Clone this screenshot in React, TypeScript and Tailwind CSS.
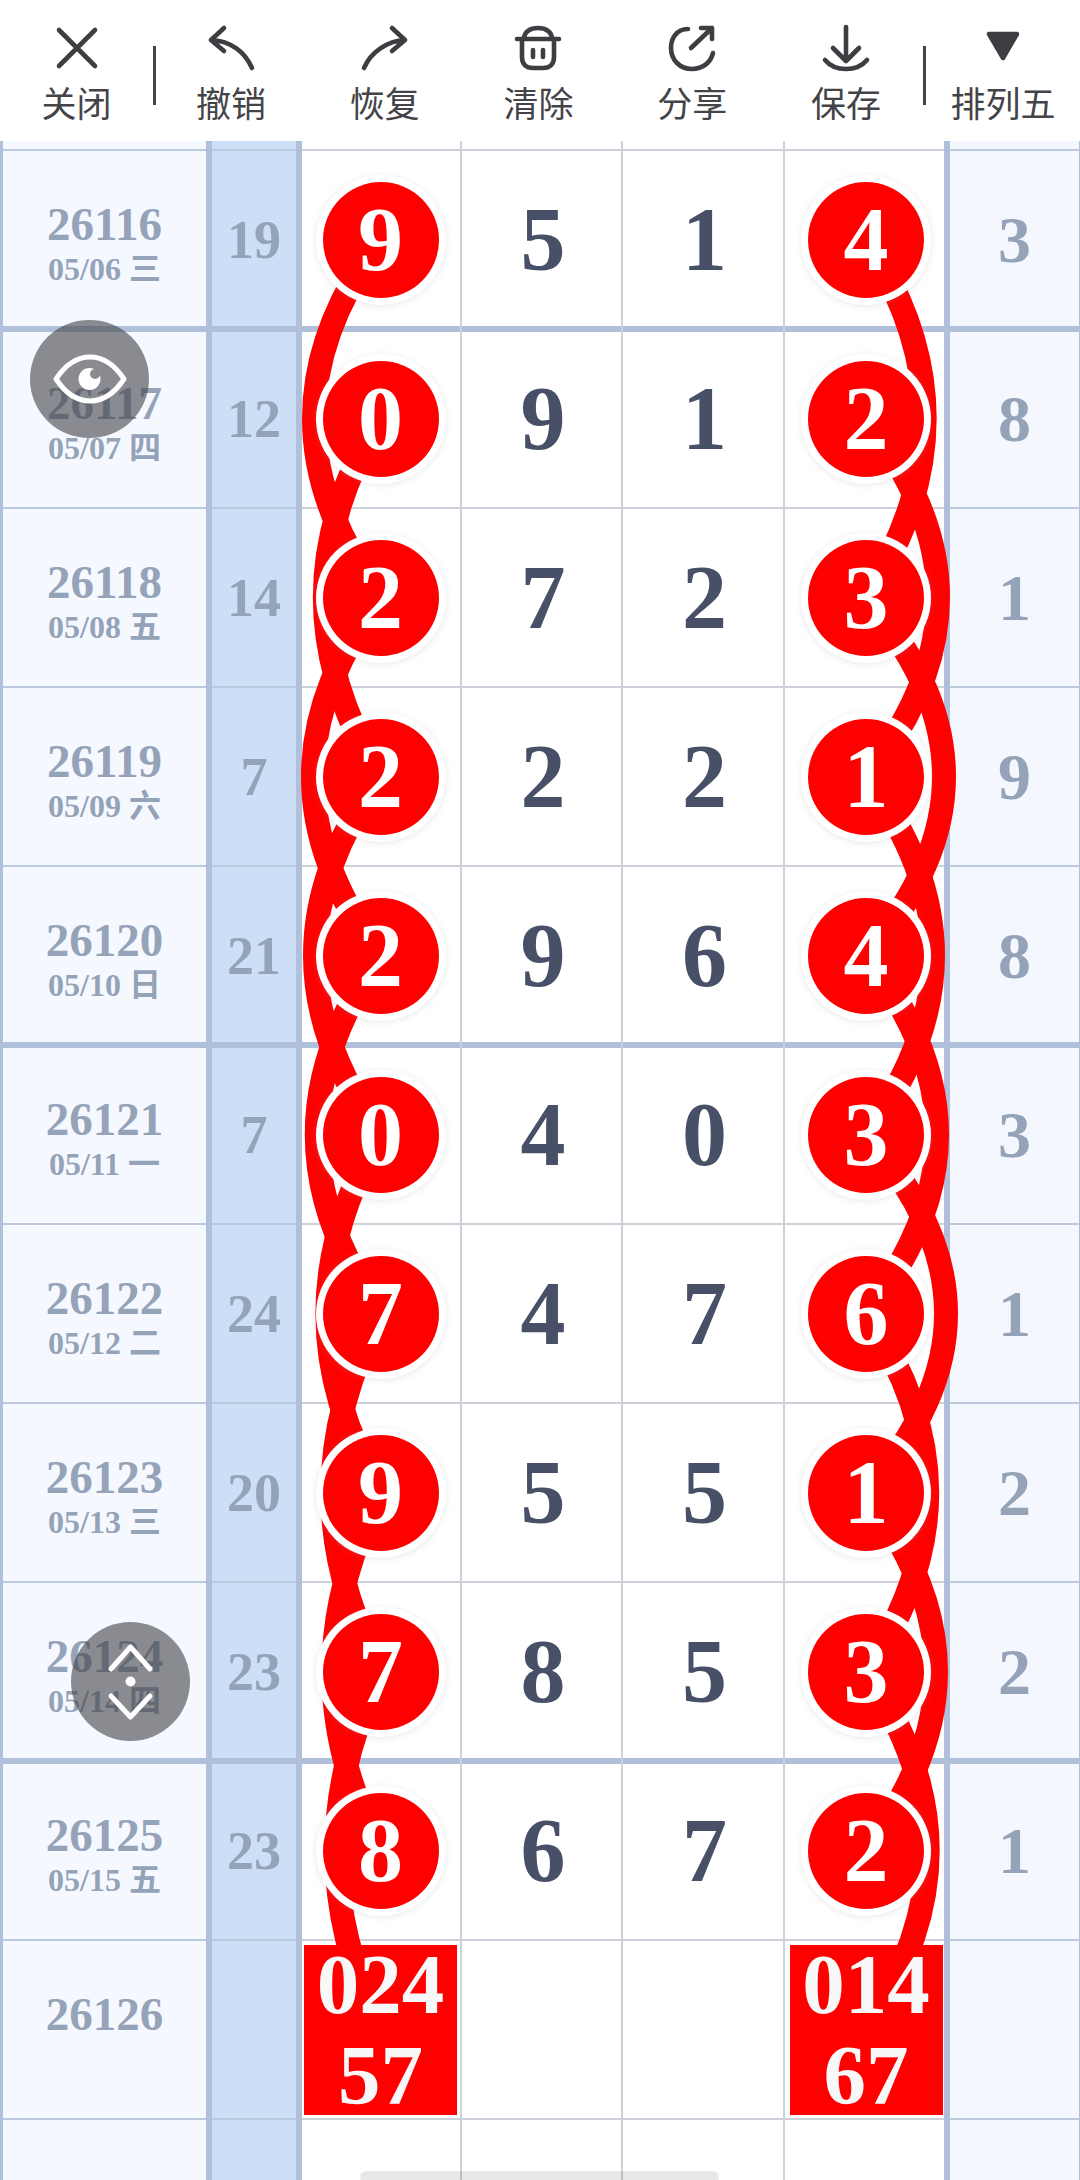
import React from "react";

const serif = "font-['Liberation_Serif','Noto_Sans_CJK_SC',serif] font-bold";

type Row = { id: string; date: string; sum: string; a: string; b: string; c: string; d: string; e: string };
const rows: Row[] = [
  { id: "26116", date: "05/06 三", sum: "19", a: "9", b: "5", c: "1", d: "4", e: "3" },
  { id: "26117", date: "05/07 四", sum: "12", a: "0", b: "9", c: "1", d: "2", e: "8" },
  { id: "26118", date: "05/08 五", sum: "14", a: "2", b: "7", c: "2", d: "3", e: "1" },
  { id: "26119", date: "05/09 六", sum: "7", a: "2", b: "2", c: "2", d: "1", e: "9" },
  { id: "26120", date: "05/10 日", sum: "21", a: "2", b: "9", c: "6", d: "4", e: "8" },
  { id: "26121", date: "05/11 一", sum: "7", a: "0", b: "4", c: "0", d: "3", e: "3" },
  { id: "26122", date: "05/12 二", sum: "24", a: "7", b: "4", c: "7", d: "6", e: "1" },
  { id: "26123", date: "05/13 三", sum: "20", a: "9", b: "5", c: "5", d: "1", e: "2" },
  { id: "26124", date: "05/14 四", sum: "23", a: "7", b: "8", c: "5", d: "3", e: "2" },
  { id: "26125", date: "05/15 五", sum: "23", a: "8", b: "6", c: "7", d: "2", e: "1" },
];

const sideLines: Record<string, string> = {
  "00": "shadow-[inset_0_1px_0_#bcc8dd,inset_0_-1px_0_#bcc8dd]",
  "01": "shadow-[inset_0_1px_0_#bcc8dd,inset_0_-3px_0_#b0c0da]",
  "10": "shadow-[inset_0_3px_0_#b0c0da,inset_0_-1px_0_#bcc8dd]",
};
const mainLines: Record<string, string> = {
  "00": "shadow-[inset_0_1px_0_#cdd1da,inset_0_-1px_0_#cdd1da]",
  "01": "shadow-[inset_0_1px_0_#cdd1da,inset_0_-3px_0_#b0c0da]",
  "10": "shadow-[inset_0_3px_0_#b0c0da,inset_0_-1px_0_#cdd1da]",
};

const rowY = (i: number) => 239.5 + 179 * i;
const leftBulge = [314, 325, 313, 315, 317, 327.5, 332.5, 333.5, 336.5];
const rightBulge = [924.5, 938, 944, 933, 937, 946, 927, 936, 927.5];

const strands = (x: number, bulges: number[]) =>
  bulges.map((b, i) => `M${x} ${rowY(i)} Q${2 * b - x} ${rowY(i + 1)} ${x} ${rowY(i + 2)}`);

function Ball({ v }: { v: string }) {
  return (
    <div
      className={`${serif} relative z-20 flex h-[116px] w-[116px] items-center justify-center rounded-full bg-[#ff0000] text-[90px] leading-none text-white shadow-[0_0_0_7px_#fff,0_1px_6px_7px_rgba(150,150,160,0.22)]`}
    >
      {v}
    </div>
  );
}

function Square({ top, bottom }: { top: string; bottom: string }) {
  return (
    <div
      className={`${serif} relative z-20 flex h-[170px] w-[153px] flex-col items-center justify-center bg-[#ff0000] text-[85px] leading-[91px] text-[#f8f8f8]`}
    >
      <span>{top}</span>
      <span>{bottom}</span>
    </div>
  );
}

function TableRow({ row, id, prevThick, thick, children }: {
  row?: Row;
  id?: string;
  prevThick: boolean;
  thick: boolean;
  children?: [React.ReactNode, React.ReactNode];
}) {
  const key = `${prevThick ? 1 : 0}${thick ? 1 : 0}`;
  const side = sideLines[key];
  const main = mainLines[key];
  const digit = `${serif} flex items-center justify-center pl-[3px] text-[90px] leading-none text-[#475066]`;
  return (
    <div className="grid h-[179px] grid-cols-[206px_96px_160px_161px_162px_159px_136px]">
      <div className={`${serif} ${side} flex flex-col items-center justify-center border-l-[3px] border-[#b0c0da] bg-[#f6f8ff] pt-[9px] text-[#94a3b8]`}>
        <span className="text-[47px] leading-[50px]">{row?.id ?? id ?? "\u00a0"}</span>
        <span className="text-[32px] leading-[40px]">{row?.date ?? "\u00a0"}</span>
      </div>
      <div className={`${serif} ${side} flex items-center justify-center border-x-[6px] border-[#b0c0da] bg-[#cddff7] text-[54px] leading-none text-[#94a3b8]`}>
        {row?.sum}
      </div>
      <div className={`${main} flex items-center justify-center border-r-2 border-[#cdd1da] bg-white pr-[1px]`}>
        {row ? <Ball v={row.a} /> : children?.[0]}
      </div>
      <div className={`${main} ${digit} border-r-2 border-[#cdd1da] bg-white`}>{row?.b}</div>
      <div className={`${main} ${digit} border-r-2 border-[#cdd1da] bg-white`}>{row?.c}</div>
      <div className={`${main} flex items-center justify-center bg-white pl-[3px]`}>
        {row ? <Ball v={row.d} /> : children?.[1]}
      </div>
      <div className={`${serif} ${side} flex items-center justify-center border-l-[6px] border-r border-[#b0c0da] bg-[#f4f7fe] text-[66px] leading-none text-[#94a3b8]`}>
        {row?.e}
      </div>
    </div>
  );
}

const iconStroke = {
  fill: "none",
  stroke: "#3d3d42",
  strokeWidth: 4.6,
  strokeLinecap: "round" as const,
  strokeLinejoin: "round" as const,
};

function ToolItem({ label, className, children }: { label: string; className: string; children: React.ReactNode }) {
  return (
    <div className={`flex flex-col items-center pt-[24px] ${className}`}>
      <svg viewBox="0 0 60 48" className="h-[48px] w-[60px]">
        {children}
      </svg>
      <span className="mt-[10px] whitespace-nowrap font-['Noto_Sans_CJK_SC',sans-serif] text-[35px] leading-[40px] text-[#444448]">
        {label}
      </span>
    </div>
  );
}

function Toolbar() {
  return (
    <div className="relative z-40 flex h-[141px] bg-white">
      <ToolItem label="关闭" className="w-[153px]">
        <path d="M12 6 L48 42 M48 6 L12 42" {...iconStroke} />
      </ToolItem>
      <div className="mt-[46px] h-[59px] w-[3px] bg-[#444448]" />
      <ToolItem label="撤销" className="-ml-[2px] w-[153.8px]">
        <path d="M10 16 L23 4 M10 16 L23 27 M10 16 C30 17 44 28 51 44" {...iconStroke} />
      </ToolItem>
      <ToolItem label="恢复" className="w-[153.8px]">
        <path d="M50 16 L37 4 M50 16 L37 27 M50 16 C32 17 16 28 9 44" {...iconStroke} />
      </ToolItem>
      <ToolItem label="清除" className="w-[153.8px]">
        <path d="M9 15 H51 M16 15 C16 8 22 4 30 4 C38 4 44 8 44 15 M14 15 V33 C14 40 18 44 25 44 H35 C42 44 46 40 46 33 V15 M25 26 V33 M35 26 V33" {...iconStroke} />
      </ToolItem>
      <ToolItem label="分享" className="w-[153.8px]">
        <path d="M26 5 C14 5 9 15 9 24 C9 36 18 45 30 45 C41 45 49 38 51 29 M29 24 L50 4 M39 4 H50 V15" {...iconStroke} />
      </ToolItem>
      <ToolItem label="保存" className="w-[153.8px]">
        <path d="M30 3 V37 M17 24 L30 37 L43 24 M9 36 C14 42 21 45 30 45 C39 45 46 42 51 36" {...iconStroke} />
      </ToolItem>
      <div className="mt-[46px] h-[59px] w-[3px] bg-[#444448]" />
      <ToolItem label="排列五" className="flex-1">
        <path d="M16 10 H44 L30 34 Z" fill="#3d3d42" stroke="#3d3d42" strokeWidth={4.5} strokeLinejoin="round" />
      </ToolItem>
    </div>
  );
}

export default function App() {
  const thickAfter = (i: number) => i % 4 === 0;
  return (
    <div className="relative h-[2180px] w-[1080px] overflow-hidden bg-white">
      <Toolbar />
      <div className="-mt-[170px]">
        <TableRow prevThick={false} thick={false} />
        {rows.map((r, i) => (
          <TableRow key={r.id} row={r} prevThick={i > 0 && thickAfter(i - 1)} thick={thickAfter(i)} />
        ))}
        <TableRow id="26126" prevThick={false} thick={false}>
          {[<Square key="l" top="024" bottom="57" />, <Square key="r" top="014" bottom="67" />]}
        </TableRow>
        <TableRow prevThick={false} thick={false} />
      </div>

      <svg viewBox="0 0 1080 2180" className="pointer-events-none absolute left-0 top-0 z-10 h-[2180px] w-[1080px]">
        {[...strands(380, leftBulge), ...strands(866, rightBulge)].map((d) => (
          <path key={d} d={d} fill="none" stroke="#ff0000" strokeWidth={24} />
        ))}
      </svg>

      <div className="absolute left-[30px] top-[320px] z-30 h-[118px] w-[119px] rounded-full bg-[rgba(67,67,70,0.6)]">
        <svg viewBox="0 0 119 118" className="h-full w-full">
          <path d="M26 59 C36 44 47 37 60 37 C73 37 84 44 94 59 C84 74 73 81 60 81 C47 81 36 74 26 59 Z" fill="none" stroke="#fff" strokeWidth={5} strokeLinejoin="round" />
          <circle cx="59.5" cy="59" r="11" fill="#fff" />
          <circle cx="65" cy="54" r="5" fill="#8b8a8e" />
        </svg>
      </div>

      <div className="absolute left-[71px] top-[1622px] z-30 h-[119px] w-[119px] rounded-full bg-[rgba(67,67,70,0.6)]">
        <svg viewBox="0 0 119 119" className="h-full w-full">
          <path d="M40 47 L59.5 25 L79 47 M40 74 L59.5 95 L79 74" fill="none" stroke="#fff" strokeWidth={5} strokeLinecap="round" strokeLinejoin="round" />
          <circle cx="59.5" cy="59.5" r="5" fill="#fff" />
        </svg>
      </div>

      <div className="absolute left-[360px] top-[2171px] z-30 h-[12px] w-[359px] rounded-full bg-[rgba(0,0,0,0.09)]" />
    </div>
  );
}
